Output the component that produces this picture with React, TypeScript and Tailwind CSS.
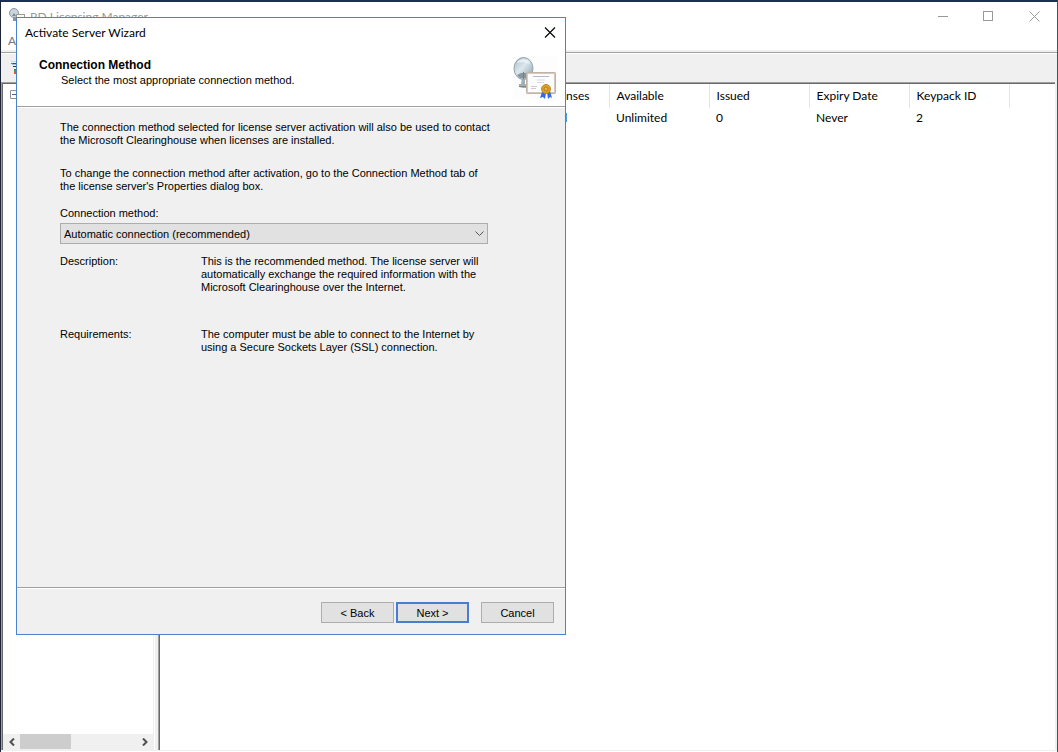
import React from 'react'

const columns = ['Total Licenses', 'Available', 'Issued', 'Expiry Date', 'Keypack ID']
const values = ['Unlimited', 'Unlimited', '0', 'Never', '2']

const App: React.FC = () => {
  return (
    <div className="relative min-h-screen flex flex-col bg-white border-t-2 border-t-[#1b2f57] border-l border-l-[#1c2438] border-r border-r-[#3c5078] font-['Lato',sans-serif] text-xs text-black">
      <TitleBar />
      <nav className="h-5 px-[7px] pt-[2px] flex items-center text-[#777777]">
        <button type="button" aria-label="Action">A</button>
      </nav>
      <div className="h-[2px] bg-[#f0f0f0]" />
      <div className="h-[30px] border-t border-[#a0a0a0] bg-[#f0f0f0] px-2 flex items-center shadow-[inset_0_1px_0_#ffffff]">
        <button type="button" aria-label="Show tree">
          <TreeIcon />
        </button>
      </div>
      <main className="flex-1 flex border-b border-white bg-[#f0f0f0]">
        <TreePane />
        <section className="flex-1 ml-[3px] mr-[2px] mb-px bg-white border-l border-t border-[#a0a0a0]">
          <div className="h-full border-l border-t border-[#696969]">
            <LicenseTable />
          </div>
        </section>
      </main>
      <ActivateDialog />
    </div>
  )
}

const TitleBar: React.FC = () => {
  return (
    <header className="h-7 flex items-center justify-between">
      <div className="flex items-center gap-1 pl-2">
        <SmallServerIcon />
        <h1 className="pt-[2px] text-[#999999]">RD Licensing Manager</h1>
      </div>
      <div className="flex">
        <button type="button" aria-label="Minimize" className="w-[45px] h-7 flex items-center justify-center">
          <svg width="11" height="11" viewBox="0 0 11 11" stroke="#999999" shapeRendering="crispEdges"><path d="M0 5.5h10" /></svg>
        </button>
        <button type="button" aria-label="Maximize" className="w-[45px] h-7 flex items-center justify-center">
          <svg width="11" height="11" viewBox="0 0 11 11" fill="none" stroke="#999999" shapeRendering="crispEdges"><path d="M.5.5h9v9h-9z" /></svg>
        </button>
        <button type="button" aria-label="Close" className="w-[46px] h-7 flex items-center justify-center">
          <svg width="11" height="11" viewBox="0 0 11 11" stroke="#999999"><path d="M.5.5l10 10M10.5.5l-10 10" /></svg>
        </button>
      </div>
    </header>
  )
}

const TreePane: React.FC = () => {
  return (
    <aside className="w-[154px] mb-px bg-white border-l border-t border-[#a0a0a0] flex">
      <div className="flex-1 mr-px border-l border-t border-l-[#696969] border-t-[#696969] border-r border-r-[#f0f0f0] flex flex-col justify-between">
        <button type="button" aria-label="Collapse" className="mt-[6px] ml-[7px] w-[9px] h-[9px] border border-[#919191] rounded-[1px] flex items-center justify-center">
          <span className="w-[5px] h-px bg-[#4b63a7]" />
        </button>
        <div className="h-4 bg-[#f0f0f0] flex">
          <button type="button" aria-label="Scroll left" className="w-[17px] flex items-center justify-center">
            <svg width="6" height="8" viewBox="0 0 6 8" fill="none" stroke="#505050" strokeWidth="2"><path d="M5 .5L1.500 4 5 7.500" /></svg>
          </button>
          <div className="flex-1">
            <div className="w-[51px] h-[15px] bg-[#cdcdcd]" />
          </div>
          <button type="button" aria-label="Scroll right" className="w-[17px] flex items-center justify-center">
            <svg width="6" height="8" viewBox="0 0 6 8" fill="none" stroke="#505050" strokeWidth="2"><path d="M1 .5L4.500 4 1 7.500" /></svg>
          </button>
        </div>
      </div>
    </aside>
  )
}

const LicenseTable: React.FC = () => {
  return (
    <table className="w-full table-fixed text-left">
      <thead>
        <tr className="h-6">
          <th className="w-[349px] border-r border-[#e5e5e5]" />
          {columns.map((column) => (
            <th key={column} className="w-[100px] pl-[7px] border-r border-[#e5e5e5] font-normal">{column}</th>
          ))}
          <th />
        </tr>
      </thead>
      <tbody>
        <tr className="h-5">
          <td />
          {values.map((value, i) => (
            <td key={columns[i]} className="pl-[7px]">{value}</td>
          ))}
          <td />
        </tr>
      </tbody>
    </table>
  )
}

const ActivateDialog: React.FC = () => {
  return (
    <div
      role="dialog"
      aria-labelledby="wizard-title"
      className="absolute left-[15px] top-[15px] w-[550px] border border-[#4a82cd] bg-[#f0f0f0] flex flex-col"
    >
      <div className="h-[30px] pl-2 pr-[9px] bg-white flex items-center justify-between">
        <h2 id="wizard-title">Activate Server Wizard</h2>
        <button type="button" aria-label="Close wizard">
          <svg width="12" height="12" viewBox="0 0 12 12" stroke="#000000" strokeWidth="1.1"><path d="M1 .5l10 10M11 .5L1 10.500" /></svg>
        </button>
      </div>
      <div className="h-[58px] pl-[22px] pr-2 bg-white flex items-start justify-between font-['Liberation_Sans',Arial,sans-serif] text-[11px]">
        <div className="pt-2">
          <h3 className="text-[12px] leading-[18px] font-bold">Connection Method</h3>
          <p className="pl-[22px] leading-[13px]">Select the most appropriate connection method.</p>
        </div>
        <ServerIcon className="mt-2 w-11 h-11" />
      </div>
      <div className="h-[2px] border-t border-[#a0a0a0] bg-white" />

      <div className="min-h-[479px] px-[43px] pt-[13px] font-['Liberation_Sans',Arial,sans-serif] text-[11px] leading-[13px]">
        <p>
          The connection method selected for license server activation will also be used to contact<br />
          the Microsoft Clearinghouse when licenses are installed.
        </p>
        <p className="mt-5">
          To change the connection method after activation, go to the Connection Method tab of<br />
          the license server's Properties dialog box.
        </p>
        <label htmlFor="method" className="block mt-[14px]">Connection method:</label>
        <div className="relative w-[428px] mt-[3px]">
          <select id="method" className="block w-full h-[21px] pl-[3px] pt-px appearance-none bg-[#e1e1e1] border border-[#adadad]">
            <option>Automatic connection (recommended)</option>
          </select>
          <svg className="absolute right-1 top-2 pointer-events-none" width="9" height="6" viewBox="0 0 9 6" fill="none" stroke="#555555"><path d="M.5.5l4 4 4-4" /></svg>
        </div>
        <dl className="mt-[11px] grid grid-cols-[141px_1fr] gap-y-[34px]">
          <dt>Description:</dt>
          <dd>
            This is the recommended method. The license server will<br />
            automatically exchange the required information with the<br />
            Microsoft Clearinghouse over the Internet.
          </dd>
          <dt>Requirements:</dt>
          <dd>
            The computer must be able to connect to the Internet by<br />
            using a Secure Sockets Layer (SSL) connection.
          </dd>
        </dl>
      </div>

      <div className="h-[2px] border-t border-[#a0a0a0] bg-white" />
      <div className="h-[45px] pt-[13px] pr-[11px] flex justify-end font-['Liberation_Sans',Arial,sans-serif] text-[11px]">
        <button type="button" className="w-[73px] h-[21px] pt-px border border-[#adadad] bg-[#e1e1e1]">&lt; Back</button>
        <button type="button" className="w-[73px] h-[21px] pt-px ml-[2px] border-2 border-[#4a7dcd] bg-[#e1e1e1] flex items-center justify-center">Next &gt;</button>
        <button type="button" className="w-[73px] h-[21px] pt-px ml-3 border border-[#adadad] bg-[#e1e1e1]">Cancel</button>
      </div>
    </div>
  )
}

interface IconProps {
  className?: string
}

// satellite dish with a certificate in front
const ServerIcon: React.FC<IconProps> = ({ className }) => {
  return (
    <svg className={className} viewBox="0 0 44 44" fill="none">
      <defs>
        <linearGradient id="dish" x1="0" y1="0" x2="1" y2="1">
          <stop offset="0" stopColor="#a9b8c2" />
          <stop offset=".45" stopColor="#dce8ee" />
          <stop offset="1" stopColor="#8599a5" />
        </linearGradient>
      </defs>
      <rect width="44" height="44" fill="#fdfdfd" />
      <path d="M9 22l-1 6h-2v3l4 1h6v-3l-4-1v-6z" fill="#a3afb6" />
      <path d="M6 30.500h8" stroke="#7d8a92" />
      <ellipse cx="10.500" cy="12.500" rx="9.500" ry="11" fill="url(#dish)" stroke="#93a2ab" />
      <path d="M4 7c3-5 10-5 13 1-4-2-9-2-13-1z" fill="#f4fafc" opacity=".7" />
      <path d="M4 19l4-2h4l4 1-3 4H7z" fill="#8496a1" />
      <path d="M10.500 16v7" stroke="#6f808b" />
      <rect x="14" y="17" width="28" height="20" rx="1" fill="#fcfcfc" stroke="#d3c9bc" strokeWidth="2" />
      <rect x="13.500" y="16.500" width="29" height="21" rx="1" stroke="#a99c8e" strokeWidth=".5" />
      <path d="M20 20.500h16" stroke="#b5bbcc" />
      <path d="M24 24h8M24 26.500h7" stroke="#dadae0" />
      <path d="M18 30.500h6M18 32.500h5" stroke="#cccccc" />
      <path d="M29 36l-2 6 3-1 2 2 1-6zM34 36l1 7 2-2 2 1-2-7z" fill="#356be0" />
      <circle cx="33" cy="33" r="4.500" fill="#dda127" stroke="#c28a1c" />
      <circle cx="33" cy="33" r="2" fill="#e5b445" stroke="#b98119" />
    </svg>
  )
}

// faded title bar version
const SmallServerIcon: React.FC = () => {
  return (
    <svg width="17" height="17" viewBox="0 0 17 17" fill="none">
      <path d="M4 9h3v3h3v1H4z" fill="#8b969c" />
      <ellipse cx="5" cy="5" rx="4.500" ry="4.500" fill="#c9d6dd" stroke="#8b989f" />
      <path d="M3 8l2-3 2 3z" fill="#7d8a92" />
      <rect x="7.500" y="6.500" width="8" height="7" fill="#fafafa" stroke="#a79a94" />
      <path d="M9 9.500h5" stroke="#b9bdd0" />
    </svg>
  )
}

const TreeIcon: React.FC = () => {
  return (
    <svg width="16" height="16" viewBox="0 0 16 16" fill="none" shapeRendering="crispEdges">
      <path d="M2 1.500h10" stroke="#c3dcec" />
      <path d="M2 3.500h2" stroke="#2b8fc4" />
      <path d="M4 3.500h9" stroke="#2f4f6f" />
      <path d="M3 4.500h10" stroke="#9cc4de" />
      <path d="M4 6.500h9" stroke="#333333" />
      <path d="M5 9.500h8" stroke="#4a6f52" />
      <rect x="5" y="10" width="2" height="2" fill="#3aa54a" />
      <rect x="5" y="12" width="2" height="2" fill="#e0592e" />
    </svg>
  )
}

export default App
